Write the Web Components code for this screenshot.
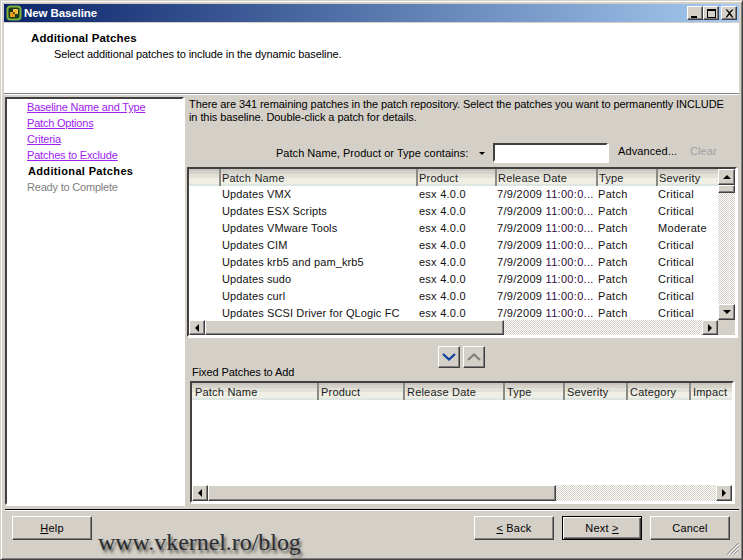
<!DOCTYPE html>
<html lang="en"><head><meta charset="utf-8"><title>New Baseline</title>
<style>html,body{margin:0;padding:0;background:#d4d0c8}body{font:11px "Liberation Sans",Arial,sans-serif;color:#000}</style>
</head><body>
<x-window>
  <x-titlebar slot="title">New Baseline</x-titlebar>
  <x-wizard-head slot="head" heading="Additional Patches">Select additional patches to include in the dynamic baseline.</x-wizard-head>
  <x-steps slot="steps"></x-steps>
  <x-patch-pane slot="pane"></x-patch-pane>
  <x-footer slot="foot"></x-footer>
</x-window>
<script>
const FONT='"Liberation Sans",Arial,sans-serif';
const make=(name,css,html,init)=>customElements.define(name,class extends HTMLElement{
  connectedCallback(){ if(this.shadowRoot) return; const r=this.attachShadow({mode:'open'});
    r.innerHTML=`<style>${css}</style>${typeof html==='function'?html(this):html}`; if(init)init(this,r);}
});
const dither='background-color:#fff;background-image:conic-gradient(#d4d0c8 25%,#fff 0 50%,#d4d0c8 0 75%,#fff 0);background-size:2px 2px;';
const raised='background:#d4d0c8;box-sizing:border-box;border:1px solid;border-color:#fff #404040 #404040 #fff;box-shadow:inset -1px -1px 0 #808080;';

make('x-window',`
 :host{display:block;width:743px;height:560px;box-sizing:border-box;position:relative;background:#d4d0c8;overflow:hidden;
   border:1px solid;border-color:#d4d0c8 #404040 #404040 #d4d0c8;box-shadow:inset 1px 1px 0 #fff,inset -1px -1px 0 #808080}
 .wrap{display:flex;flex-direction:column;height:100%;padding:3px;box-sizing:border-box}
 .main{display:flex;height:408px;margin:3px 0 0 1px;gap:3px}
`,`<div class="wrap"><slot name="title"></slot><slot name="head"></slot>
 <div class="main"><slot name="steps"></slot><slot name="pane"></slot></div>
 <slot name="foot"></slot></div>`);

make('x-titlebar',`
 :host{display:flex;align-items:center;height:18px;margin-bottom:1px;background:linear-gradient(90deg,#0a246a,#a6caf0);color:#fff;flex:none}
 svg{margin:0 2px 0 2px;flex:none}
 b{font:bold 11.5px ${FONT};letter-spacing:-.1px;flex:1}
 .btns{display:flex;margin-right:2px}
 x-capbtn+x-capbtn:last-child{margin-left:2px}
`,`<svg width="16" height="16" viewBox="0 0 16 16"><rect x="1.5" y="1.5" width="13" height="13" rx="3" fill="#1a3a20" stroke="#7fb23a" stroke-width="2"/><rect x="4" y="7" width="5" height="5" fill="#e89a20"/><rect x="7" y="4" width="5" height="5" fill="#f5c040"/><rect x="7" y="7" width="2" height="2" fill="#7a4a10"/></svg>
 <b><slot></slot></b><div class="btns"><x-capbtn kind="min"></x-capbtn><x-capbtn kind="max"></x-capbtn><x-capbtn kind="close"></x-capbtn></div>`);

make('x-capbtn',`:host{display:block;width:16px;height:14px;${raised}}svg{display:block}`,
 h=>{const k=h.getAttribute('kind');const p={min:'<rect x="3" y="9" width="6" height="2"/>',
   max:'<path d="M3 2h9v9H3zM4 4v6h7V4z" fill-rule="evenodd"/>',
   close:'<path d="M3.5 2.5h1.6L7.5 5l2.4-2.5h1.6L8.3 6l3.2 4.5H9.9L7.5 7.5 5.1 10.5H3.5L6.7 6z"/>'}[k];
   return `<svg width="14" height="12" viewBox="0 0 14 12">${p}</svg>`});

make('x-wizard-head',`
 :host{display:block;height:70px;background:#fff;border-bottom:1px solid #808080;box-shadow:0 1px 0 #fff;flex:none;box-sizing:content-box;position:relative}
 h1{font:bold 11.5px ${FONT};margin:0;padding:8px 0 0 27px;line-height:14px;letter-spacing:.12px}
 p{margin:0;padding:2px 0 0 50px;font:11px ${FONT};line-height:14px;letter-spacing:-.1px}
`,h=>`<h1>${h.getAttribute('heading')}</h1><p><slot></slot></p>`);

make('x-steps',`
 :host{display:block;width:179px;box-sizing:border-box;background:#fff;border:2px solid;border-color:#404040 #fff #fff #404040;box-shadow:1px 1px 0 #fff;padding:0 0 0 20px;flex:none}
 div{height:16px;font:11px/16px ${FONT};letter-spacing:-.2px;white-space:nowrap}
 a{color:#a020f0;text-decoration:underline}
 .cur{font-weight:bold;letter-spacing:.35px;padding-left:1px}.off{color:#808080}
`,`<div><a href="#">Baseline Name and Type</a></div><div><a href="#">Patch Options</a></div><div><a href="#">Criteria</a></div><div><a href="#">Patches to Exclude</a></div><div class="cur">Additional Patches</div><div class="off">Ready to Complete</div>`);

make('x-scrollbtn',`:host{display:flex;align-items:center;justify-content:center;${raised}flex:none}
 i{display:block;width:0;height:0;border:4px solid transparent}
 :host([dir=up]) i{border-top:0;border-bottom-color:#000}
 :host([dir=down]) i{border-bottom:0;border-top-color:#000}
 :host([dir=left]) i{border-left:0;border-right-color:#000}
 :host([dir=right]) i{border-right:0;border-left-color:#000}`,`<i></i>`);

make('x-hscroll',`:host{display:flex;height:16px;flex:none}
 .t{${raised}} .r{flex:1;${dither}} x-scrollbtn{width:16px}`,
 h=>`<x-scrollbtn dir="left"></x-scrollbtn><div class="t" style="width:${h.getAttribute('thumb')}px"></div><div class="r"></div><x-scrollbtn dir="right"></x-scrollbtn>`);

make('x-vscroll',`:host{display:flex;flex-direction:column;width:17px;flex:none}
 x-scrollbtn{height:16px}.t{height:8px;${raised}}.r{flex:1;${dither}}`,
 `<x-scrollbtn dir="up"></x-scrollbtn><div class="t"></div><div class="r"></div><x-scrollbtn dir="down"></x-scrollbtn>`);

make('x-grid-head',`:host{display:grid;height:17px;flex:none;background:linear-gradient(#c9c6bf 0 2px,#d4d2ca 2px 5px,#e2e1d8 5px 9px,#efefe6 9px 15px,#dde6e0 15px);overflow:hidden}
 span{font:11px/19px ${FONT};letter-spacing:.2px;padding-left:var(--hp,1px);border-left:2px solid #8c8a84;white-space:nowrap;overflow:hidden;box-sizing:border-box;color:#1c1c1c}
 span.first{border-left:0;padding-left:3px}`,
 h=>{const c=JSON.parse(h.getAttribute('cols'));h.style.gridTemplateColumns=c.map(x=>x[1]+'px').join(' ');
   return c.map((x,i)=>`<span class="${x[0]===''||h.hasAttribute('noblank')&&i==0?'first':''}">${x[0]}</span>`).join('')});

make('x-grid-row',`:host{display:grid;height:17px;flex:none;overflow:hidden}
 span{font:11px/17px ${FONT};letter-spacing:.3px;white-space:nowrap;overflow:hidden;color:#111;padding-left:2px;box-sizing:border-box}
 span:nth-child(2){letter-spacing:.05px}span:nth-child(3){letter-spacing:.12px;padding-left:3px}span:nth-child(4){padding-left:3px;letter-spacing:.25px}
 em{font-style:normal;color:#300a40}`,
 h=>{const c=JSON.parse(h.getAttribute('cols'));h.style.gridTemplateColumns=c.map(x=>x+'px').join(' ');
   return JSON.parse(h.getAttribute('cells')).map(x=>`<span>${x}</span>`).join('')});

make('x-patch-table',`:host{display:flex;height:170px;box-sizing:border-box;border:2px solid;border-color:#404040 #fff #fff #404040;background:#fff;box-shadow:1px 1px 0 #fff;flex:none}
 .l{flex:1;display:flex;flex-direction:column;min-width:0}
 .rows{flex:1;overflow:hidden;display:flex;flex-direction:column;background:#fff;min-height:0}
 .side{display:flex;flex-direction:column}.corner{height:15px;background:#d4d0c8;flex:none}x-vscroll{flex:1}`,
 ()=>{const cw=[30,197,79,101,60,62];const heads=[['',30],['Patch Name',197],['Product',79],['Release Date',101],['Type',60],['Severity',62]];
  const data=[['Updates VMX','Critical'],['Updates ESX Scripts','Critical'],['Updates VMware Tools','Moderate'],['Updates CIM','Critical'],['Updates krb5 and pam_krb5','Critical'],['Updates sudo','Critical'],['Updates curl','Critical'],['Updates SCSI Driver for QLogic FC','Critical']];
  const rows=data.map(d=>`<x-grid-row cols='${JSON.stringify(cw)}' cells='${JSON.stringify(['',d[0],'esx 4.0.0','7/9/2009 <em>11:00:0...</em>','Patch',d[1]])}'></x-grid-row>`).join('');
  return `<div class="l"><x-grid-head cols='${JSON.stringify(heads)}'></x-grid-head><div class="rows">${rows}</div><x-hscroll thumb="299" style="height:15px"></x-hscroll></div><div class="side"><x-vscroll></x-vscroll><div class="corner"></div></div>`});

make('x-fixed-table',`:host{display:flex;flex-direction:column;height:122px;box-sizing:border-box;border:2px solid;border-color:#404040 #fff #fff #404040;margin:4px 3px 0 3px;background:#fff;box-shadow:1px 1px 0 #fff;--hp:2px;flex:none}
 .b{flex:1}`,
 ()=>{const heads=[['Patch Name',125],['Product',86],['Release Date',100],['Type',60],['Severity',63],['Category',63],['Impact',43]];
  return `<x-grid-head noblank cols='${JSON.stringify(heads)}'></x-grid-head><div class="b"></div><x-hscroll thumb="348"></x-hscroll>`});

make('x-movebtn',`:host{display:flex;align-items:center;justify-content:center;width:22px;height:22px;${raised}}svg{display:block}`,
 h=>`<svg width="16" height="10" viewBox="0 0 16 10"><path d="${h.getAttribute('dir')==='down'?'M2 2l6 5.5L14 2':'M2 8l6-5.5L14 8'}" fill="none" stroke="${h.getAttribute('dir')==='down'?'#0a3fa0':'#808080'}" stroke-width="2.2"/></svg>`);

make('x-patch-pane',`:host{display:flex;flex-direction:column;flex:none;width:550px;font:11px ${FONT}}
 .intro{margin:0;padding:1px 0 0 2px;height:46px;box-sizing:border-box;line-height:13px;letter-spacing:-.08px;white-space:nowrap;flex:none}
 .filter{display:flex;align-items:flex-start;height:24px;box-sizing:border-box;flex:none}
 .filter span{white-space:nowrap}
 .lbl{margin-left:89px;width:193px;letter-spacing:.03px;line-height:20px}
 .arr{width:0;height:0;border:3px solid transparent;border-top:3px solid #000;border-bottom:0;margin:9px 0 0 10px}
 input{width:115px;height:19px;box-sizing:border-box;margin:0 0 0 8px;border:2px solid;border-color:#404040 #fff #fff #404040;background:#fff;padding:0;outline:0;box-shadow:1px 1px 0 #fff}
 .adv{margin-left:10px;width:72px;letter-spacing:.1px;line-height:16px}
 .clr{color:#a0a0a0;letter-spacing:.1px;line-height:16px}
 .move{display:flex;gap:3px;margin:9px 0 0 251px;height:22px;flex:none}
 .cap{margin:0 0 0 5px;height:9px;line-height:9px;letter-spacing:-.08px;flex:none;white-space:nowrap}
`,`<p class="intro">There are 341 remaining patches in the patch repository. Select the patches you want to permanently INCLUDE<br>in this baseline. Double-click a patch for details.</p>
 <div class="filter"><span class="lbl">Patch Name, Product or Type contains:</span><span class="arr"></span><input aria-label="filter"><span class="adv">Advanced...</span><span class="clr">Clear</span></div>
 <x-patch-table></x-patch-table>
 <div class="move"><x-movebtn dir="down"></x-movebtn><x-movebtn dir="up"></x-movebtn></div>
 <div class="cap">Fixed Patches to Add</div>
 <x-fixed-table></x-fixed-table>`);

make('x-btn',`:host{display:flex;align-items:center;justify-content:center;height:24px;width:80px;box-sizing:border-box;background:#d4d0c8;border:1px solid;border-color:#fff #404040 #404040 #fff;box-shadow:inset -1px -1px 0 #808080;font:11px ${FONT};letter-spacing:.2px;padding-bottom:1px;flex:none}
 :host([default]){border-color:#000;box-shadow:inset 1px 1px 0 #fff,inset -1px -1px 0 #404040,inset -2px -2px 0 #808080}`,`<slot></slot>`);

make('x-footer',`:host{display:block;margin:4px 0 0 1px;border-top:1px solid #000;box-shadow:inset 0 1px 0 #fff;flex:1;position:relative;width:734px;box-sizing:border-box}
 .row{display:flex;padding:6px 0 0 7px;align-items:flex-start}
 .sp{width:382px;flex:none}
 x-btn.n{margin-left:8px}
 u{text-decoration:underline}
 .mark{position:absolute;left:93px;top:18px;font:24px/28px "Liberation Serif","Times New Roman",serif;color:#2a2c30;text-shadow:2px 3px 3px #55534e;white-space:nowrap;letter-spacing:-.05px}
 svg{position:absolute;right:0;bottom:1px}`,
 `<div class="row"><x-btn><span><u>H</u>elp</span></x-btn><div class="sp"></div><x-btn><span><u>&lt;</u> Back</span></x-btn><x-btn default class="n"><span>Next <u>&gt;</u></span></x-btn><x-btn class="n"><span>Cancel</span></x-btn></div>
 <div class="mark">www.vkernel.ro/blog</div>
 <svg width="13" height="13" viewBox="0 0 13 13"><path d="M12.5 1L1 12.5M12.5 4.5L4.5 12.5M12.5 8L8 12.5" stroke="#808080" fill="none"/><path d="M12.5 2.5L2.5 12.5M12.5 6L6 12.5M12.5 9.5L9.5 12.5" stroke="#fff" fill="none"/></svg>`);
</script>
</body></html>
